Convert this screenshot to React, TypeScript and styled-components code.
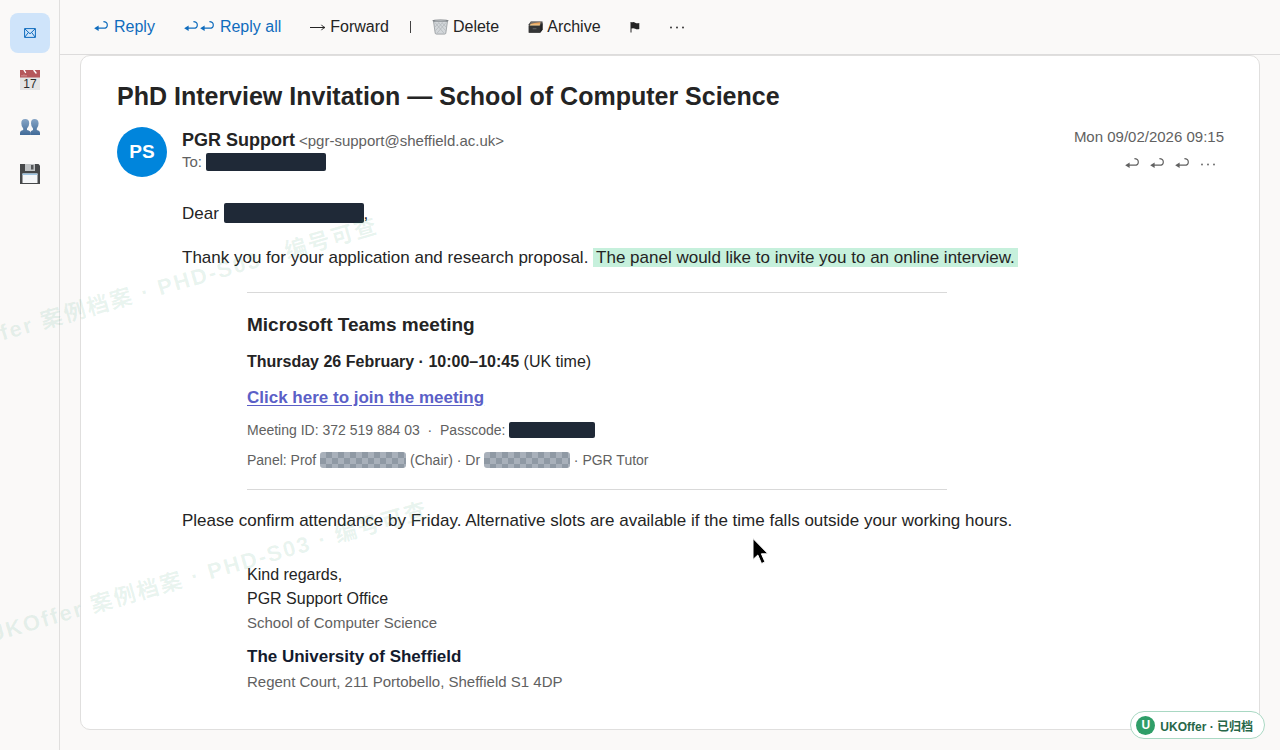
import React from "react";
import styled, { createGlobalStyle } from "styled-components";

const GlobalStyle = createGlobalStyle`
  *, *::before, *::after { box-sizing: border-box; }
  body {
    margin: 0;
    background: #faf9f8;
    color: #242424;
    font-family: "Liberation Sans", Arial, "Noto Sans CJK SC", sans-serif;
  }
  button { font: inherit; color: inherit; background: none; border: 0; padding: 0; cursor: pointer; }
  h1, h2, p { margin: 0; }
  svg { display: block; flex: none; }
`;

const Shell = styled.div`
  position: relative;
  display: flex;
  min-height: 100vh;
  overflow: hidden;
`;

const Rail = styled.nav`
  flex: none;
  width: 60px;
  padding-top: 13px;
  border-right: 1px solid #e0dfde;
  display: flex;
  flex-direction: column;
  align-items: center;
  gap: 7px;
`;

const RailButton = styled.button<{ $active?: boolean }>`
  width: 40px;
  height: 40px;
  border-radius: 8px;
  display: grid;
  place-items: center;
  color: #0f6cbd;
  background: ${(p) => (p.$active ? "#cfe4fa" : "transparent")};
`;

const Main = styled.div`
  flex: 1;
  min-width: 0;
  display: flex;
  flex-direction: column;
`;

const Toolbar = styled.div`
  height: 55px;
  padding-left: 34px;
  border-bottom: 1px solid #dddcdc;
  display: flex;
  align-items: center;
  gap: 29px;
  font-size: 16px;
`;

const ToolButton = styled.button<{ $primary?: boolean }>`
  display: flex;
  align-items: center;
  gap: ${(p) => (p.$primary ? 6 : 4)}px;
  line-height: 20px;
  color: ${(p) => (p.$primary ? "#0f6cbd" : "#242424")};
`;

const ArrowPair = styled.span`
  display: flex;
  gap: 2px;
`;

const ToolSeparator = styled.span`
  width: 1px;
  height: 12px;
  margin: 0 -8px;
  background: #424242;
`;

const Card = styled.article`
  flex: 1;
  margin: 0 20px 20px;
  padding: 25px 35px 24px 36px;
  background: #fff;
  border: 1px solid #e0dfde;
  border-radius: 10px;
`;

const Subject = styled.h1`
  font-size: 25px;
  line-height: 30px;
`;

const Header = styled.header`
  display: flex;
  gap: 15px;
  margin-top: 16px;
`;

const Avatar = styled.div`
  flex: none;
  width: 50px;
  height: 50px;
  border-radius: 50%;
  display: grid;
  place-items: center;
  background: #0085dc;
  color: #fff;
  font-size: 19px;
  font-weight: 700;
`;

const Sender = styled.div`
  flex: 1;
  padding-top: 3px;
  font-size: 15px;
  color: #616161;
`;

const SenderLine = styled.div`
  display: flex;
  align-items: center;
  gap: 4px;
  line-height: 21px;
`;

const SenderName = styled.strong`
  font-size: 18px;
  color: #242424;
`;

const Meta = styled.div`
  display: flex;
  flex-direction: column;
  align-items: flex-end;
  font-size: 15px;
  line-height: 20px;
  color: #616161;
`;

const MetaActions = styled.div`
  display: flex;
  align-items: center;
  gap: 11px;
  padding: 11px 8px 0 0;
`;

const Redacted = styled.span<{ $w: number; $h: number }>`
  display: inline-block;
  vertical-align: text-bottom;
  width: ${(p) => p.$w}px;
  height: ${(p) => p.$h}px;
  border-radius: 2px;
  background: #1f2937;
`;

const Mosaic = styled(Redacted)`
  border-radius: 3px;
  background: repeating-conic-gradient(#8f99a4 0 25%, #a8b0ba 0 50%) 0 0 / 12px 12px;
`;

const Body = styled.div`
  margin: 24px 0 0 65px;
  font-size: 17px;
  line-height: 26px;
`;

const Paragraph = styled.p`
  & + & { margin-top: 18px; }
`;

const Highlight = styled.mark`
  padding: 0 3px;
  color: inherit;
  background: #c6f0dc;
`;

const Meeting = styled.section`
  max-width: 700px;
  margin: 21px 0 18px 65px;
  padding: 19px 0;
  border: solid #d9d9d9;
  border-width: 1px 0;
`;

const MeetingTitle = styled.h2`
  font-size: 19px;
  line-height: 26px;
`;

const MeetingTime = styled.p`
  margin-top: 12px;
  font-size: 16px;
  line-height: 24px;
`;

const JoinLink = styled.a`
  display: block;
  width: fit-content;
  margin-top: 12px;
  font-weight: 700;
  line-height: 24px;
  color: #5b5fc7;
  text-underline-offset: 2px;
`;

const MeetingDetail = styled.p`
  margin-top: 10px;
  font-size: 14px;
  line-height: 20px;
  color: #616161;
`;

const Signature = styled.footer`
  margin: 29px 0 0 65px;
  font-size: 16px;
  line-height: 24px;
`;

const SignatureNote = styled.p`
  font-size: 15px;
  color: #616161;
`;

const SignatureOrg = styled.p`
  margin-top: 9px;
  font-size: 17px;
  font-weight: 700;
  line-height: 26px;
  color: #131b2e;
`;

const Watermark = styled.div<{ $x: number; $y: number }>`
  position: absolute;
  left: ${(p) => p.$x}px;
  top: ${(p) => p.$y}px;
  transform: rotate(-16deg);
  transform-origin: 0 100%;
  white-space: nowrap;
  font-size: 22px;
  line-height: 30px;
  font-weight: 700;
  letter-spacing: 2px;
  color: rgba(24, 140, 90, 0.1);
  pointer-events: none;
`;

const ArchiveBadge = styled.div`
  position: absolute;
  right: 15px;
  bottom: 11px;
  height: 28px;
  padding: 0 11px 0 5px;
  display: flex;
  align-items: center;
  gap: 5px;
  border: 1px solid #a9d8c3;
  border-radius: 14px;
  background: #fff;
  color: #276749;
  font-size: 12px;
  font-weight: 700;
`;

const BadgeMark = styled.span`
  width: 19px;
  height: 19px;
  border-radius: 50%;
  display: grid;
  place-items: center;
  background: #2f9e68;
  color: #fff;
`;

const Pointer = styled.svg`
  position: absolute;
  left: 752px;
  top: 537px;
`;

const ReplyArrow = () => (
  <svg width="14" height="12" viewBox="0 0 14 12" fill="none" stroke="currentColor" strokeWidth="1.2">
    <path d="M3 7.2H9.6C12 7.2 13.3 5.8 13.3 3.9C13.3 1.9 11.8 0.7 9.4 0.7" />
    <path d="M0.2 7.2L4.6 4.4V10Z" fill="currentColor" stroke="none" />
  </svg>
);

const ForwardArrow = () => (
  <svg width="16" height="12" viewBox="0 0 16 12" fill="none" stroke="currentColor" strokeWidth="1">
    <path d="M0 6.5H14.5M11.5 3.8Q12.6 6 15 6.5Q12.6 7 11.5 9.2" />
  </svg>
);

const Dots = () => (
  <svg width="16" height="12" viewBox="0 0 16 12" fill="currentColor">
    <circle cx="2" cy="6.5" r="0.9" />
    <circle cx="8" cy="6.5" r="0.9" />
    <circle cx="14" cy="6.5" r="0.9" />
  </svg>
);

const FlagIcon = () => (
  <svg width="10" height="12" viewBox="0 0 10 12" fill="currentColor">
    <path d="M0.5 1H1.5V11.5H0.5ZM1.5 1.5Q3.5 0.6 5.2 1.7T9.3 2V8Q7 8.7 5.2 7.7T1.5 7.5Z" />
  </svg>
);

const TrashIcon = () => (
  <svg width="17" height="16" viewBox="0 0 17 18" preserveAspectRatio="none">
    <path d="M1.5 2.5H15.5L13.8 16Q13.6 17 12.5 17H4.5Q3.4 17 3.2 16Z" fill="#d3d7da" stroke="#8d9296" strokeWidth="0.8" />
    <path d="M3 4L12 16M6.5 4L13.5 13M10 4L14 9M14 4L5 16M10.5 4L3.6 13M7 4L3 9" stroke="#a6abaf" strokeWidth="0.6" />
    <ellipse cx="8.5" cy="2" rx="8.2" ry="1.5" fill="#777c80" />
    <ellipse cx="8.5" cy="2.2" rx="6.5" ry="0.7" fill="#c2c6c9" />
  </svg>
);

const ArchiveIcon = () => (
  <svg width="15" height="16" viewBox="0 0 16 16">
    <path d="M3 2H15.5V11L13 14H0.8V5Z" fill="#424344" />
    <path d="M3 2.4H14.8L13.4 4.6H1.8Z" fill="#746e68" />
    <path d="M3.3 4.5L7 3.8L13 3L12.8 6H2Z" fill="#e8a35c" />
    <path d="M2.5 5.4H12.5V6.6H1.5Z" fill="#f3d39a" />
    <path d="M0.8 6.6H13V14H0.8Z" fill="#343536" />
    <path d="M13 6.6L15.5 3.6V11L13 14Z" fill="#202122" />
    <path d="M5 9H9V10.5H5Z" fill="#5a5c5d" />
  </svg>
);

const MailIcon = () => (
  <svg width="12" height="10" viewBox="0 0 12 10" fill="none" stroke="currentColor" strokeWidth="1">
    <path d="M0.6 0.6H11.4V9.4H0.6ZM0.8 0.8L6 5.8L11.2 0.8M0.8 9.2L4.4 4.4M11.2 9.2L7.6 4.4" />
  </svg>
);

const CalendarIcon = () => (
  <svg width="20" height="20" viewBox="0 0 20 20">
    <path d="M0 0H20V20H0Z" fill="#e4e4e4" />
    <path d="M0 0H20V7.5H0Z" fill="#b5575b" />
    <path d="M2 6.5V5M4 6.5V4.5M6 6.5V5" stroke="#dca5a5" strokeWidth="1" />
    <path d="M4 0L5.5 2.5M14 0.5L16 3" stroke="#fff" strokeWidth="1.4" strokeLinecap="round" />
    <text x="10" y="18" textAnchor="middle" fontSize="12" fill="#2c2c2c">17</text>
  </svg>
);

const PeopleIcon = () => (
  <svg width="20" height="18" viewBox="0 0 20 18">
    <defs>
      <linearGradient id="people" x1="0" y1="0" x2="0" y2="1">
        <stop offset="0" stopColor="#86a5c6" />
        <stop offset="1" stopColor="#416b98" />
      </linearGradient>
    </defs>
    <g fill="url(#people)">
      <path d="M10.5 17V14.5Q10.5 12.8 13 12V10.5Q11 8.5 11 5.2Q11 1 14.6 1T18.6 5.2Q18.6 8.5 16.8 10.5V12Q20 12.6 20 15V17Z" />
      <path d="M0 17V15Q0 12.6 3.2 12V10.5Q1.3 8.5 1.3 5.2Q1.3 1 5.2 1T9.2 5.2Q9.2 8.5 7 10.5V12Q10.8 12.8 10.8 15V17Z" />
    </g>
  </svg>
);

const DiskIcon = () => (
  <svg width="20" height="20" viewBox="0 0 20 20">
    <path d="M0 0H18.5L20 1.5V20H0Z" fill="#46484a" />
    <path d="M5 0H15V7H5Z" fill="#bfc2c4" />
    <path d="M11 1H13.5V5.5H11Z" fill="#55585a" />
    <path d="M2.5 9.5H17.5V19H2.5Z" fill="#f4f6f8" />
    <path d="M2.5 9.5H17.5V11H2.5Z" fill="#9dc4e2" />
  </svg>
);

const watermarkText = "UKOffer 案例档案 · PHD-S03 · 编号可查";

export default function App() {
  return (
    <>
      <GlobalStyle />
      <Shell>
        <Rail aria-label="Apps">
          <RailButton $active aria-label="Mail"><MailIcon /></RailButton>
          <RailButton aria-label="Calendar"><CalendarIcon /></RailButton>
          <RailButton aria-label="People"><PeopleIcon /></RailButton>
          <RailButton aria-label="Saved"><DiskIcon /></RailButton>
        </Rail>
        <Main>
          <Toolbar role="toolbar" aria-label="Message actions">
            <ToolButton $primary><ReplyArrow />Reply</ToolButton>
            <ToolButton $primary>
              <ArrowPair><ReplyArrow /><ReplyArrow /></ArrowPair>Reply all
            </ToolButton>
            <ToolButton><ForwardArrow />Forward</ToolButton>
            <ToolSeparator />
            <ToolButton><TrashIcon />Delete</ToolButton>
            <ToolButton><ArchiveIcon />Archive</ToolButton>
            <ToolButton aria-label="Flag"><FlagIcon /></ToolButton>
            <ToolButton aria-label="More"><Dots /></ToolButton>
          </Toolbar>
          <Card>
            <Subject>PhD Interview Invitation — School of Computer Science</Subject>
            <Header>
              <Avatar>PS</Avatar>
              <Sender>
                <SenderLine>
                  <SenderName>PGR Support</SenderName>
                  <span>&lt;pgr-support@sheffield.ac.uk&gt;</span>
                </SenderLine>
                <SenderLine>
                  <span>To:</span>
                  <Redacted $w={120} $h={18} />
                </SenderLine>
              </Sender>
              <Meta>
                <time dateTime="2026-02-09T09:15">Mon 09/02/2026 09:15</time>
                <MetaActions>
                  <button aria-label="Reply"><ReplyArrow /></button>
                  <button aria-label="Reply all"><ReplyArrow /></button>
                  <button aria-label="Forward"><ReplyArrow /></button>
                  <button aria-label="More"><Dots /></button>
                </MetaActions>
              </Meta>
            </Header>
            <Body>
              <Paragraph>Dear <Redacted $w={140} $h={20} />,</Paragraph>
              <Paragraph>
                Thank you for your application and research proposal.{" "}
                <Highlight>The panel would like to invite you to an online interview.</Highlight>
              </Paragraph>
              <Meeting>
                <MeetingTitle>Microsoft Teams meeting</MeetingTitle>
                <MeetingTime><strong>Thursday 26 February · 10:00–10:45</strong> (UK time)</MeetingTime>
                <JoinLink href="#join">Click here to join the meeting</JoinLink>
                <MeetingDetail>
                  Meeting ID: 372 519 884 03 &nbsp;·&nbsp; Passcode: <Redacted $w={86} $h={16} />
                </MeetingDetail>
                <MeetingDetail>
                  Panel: Prof <Mosaic $w={86} $h={16} /> (Chair) · Dr <Mosaic $w={86} $h={16} /> · PGR Tutor
                </MeetingDetail>
              </Meeting>
              <Paragraph>
                Please confirm attendance by Friday. Alternative slots are available if the time falls outside your working hours.
              </Paragraph>
              <Signature>
                <p>Kind regards,</p>
                <p>PGR Support Office</p>
                <SignatureNote>School of Computer Science</SignatureNote>
                <SignatureOrg>The University of Sheffield</SignatureOrg>
                <SignatureNote>Regent Court, 211 Portobello, Sheffield S1 4DP</SignatureNote>
              </Signature>
            </Body>
          </Card>
        </Main>
        <Watermark aria-hidden $x={-57} $y={336}>{watermarkText}</Watermark>
        <Watermark aria-hidden $x={-7} $y={620}>{watermarkText}</Watermark>
        <Pointer aria-hidden width="17" height="28" viewBox="0 0 17 28">
          <path d="M1 1.5V22.5L5.8 18L9.5 26.5L13 25L9.4 16.8H16Z" fill="#000" stroke="#fff" strokeWidth="1" />
        </Pointer>
        <ArchiveBadge><BadgeMark>U</BadgeMark>UKOffer · 已归档</ArchiveBadge>
      </Shell>
    </>
  );
}
